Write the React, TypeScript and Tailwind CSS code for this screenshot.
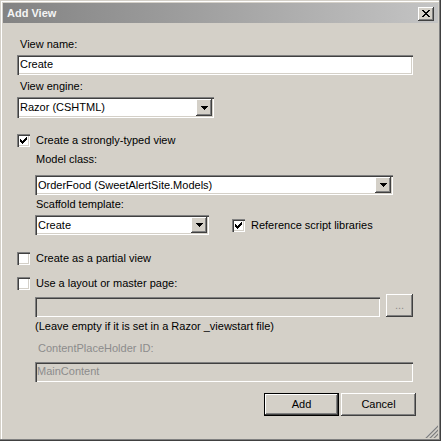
import React from "react";

const sunken =
  "shadow-[inset_1px_1px_0_#808080,inset_2px_2px_0_#404040,inset_-1px_-1px_0_#ffffff,inset_-2px_-2px_0_#d4d0c8]";
const raised =
  "shadow-[inset_-1px_-1px_0_#404040,inset_1px_1px_0_#ffffff,inset_-2px_-2px_0_#808080]";

function Check({ checked }: { checked?: boolean }) {
  return (
    <div className={`w-[13px] h-[13px] shrink-0 bg-white flex items-center justify-center ${sunken}`}>
      {checked && (
        <svg width="7" height="7" viewBox="0 0 7 7" shapeRendering="crispEdges">
          <polygon points="0,2 2,4 6,0 7,0 7,3 2,7 0,5" fill="#000" />
        </svg>
      )}
    </div>
  );
}

function Arrow() {
  return (
    <div className={`w-[16px] self-stretch bg-[#d4d0c8] flex items-center justify-center ${raised}`}>
      <svg width="7" height="4" viewBox="0 0 7 4" shapeRendering="crispEdges">
        <polygon points="0,0 7,0 3.5,4" fill="#000" />
      </svg>
    </div>
  );
}

function Select({ w, h, text }: { w: string; h: string; text: string }) {
  return (
    <div className={`${w} ${h} bg-white flex p-[2px] ${sunken}`}>
      <div className="flex-1 pl-[1px] leading-[13px] pt-[0px] flex items-center text-black">{text}</div>
      <Arrow />
    </div>
  );
}

function CheckRow({ checked, label }: { checked?: boolean; label: string }) {
  return (
    <div className="flex items-center gap-[6px] h-[13px]">
      <Check checked={checked} />
      <span className="leading-[13px]">{label}</span>
    </div>
  );
}

export default function App() {
  return (
    <div className="w-[444px] h-[445px] bg-white font-['Liberation_Sans',Arial,sans-serif] text-[11px] text-black">
      <div className="relative w-[441px] h-[441px] bg-[#d4d0c8] pt-[3px] px-[3px] flex flex-col shadow-[inset_-1px_-1px_0_#404040,inset_-2px_-2px_0_#808080,inset_1px_1px_0_#d4d0c8,inset_2px_2px_0_#ffffff]">
        <div className="h-[20px] flex items-center justify-between bg-gradient-to-r from-[#838383] to-[#c4c4c4] pl-[4px] pr-[4px]">
          <span className="font-bold text-[11px] leading-[13px] text-[#f4f4f4]">Add View</span>
          <div className={`w-[16px] h-[14px] mt-[1px] bg-[#d4d0c8] flex items-center justify-center ${raised}`}>
            <svg width="8" height="7" viewBox="0 0 8 7" shapeRendering="crispEdges">
              <path d="M0 0 L2 0 L4 2.5 L6 0 L8 0 L5 3.5 L8 7 L6 7 L4 4.5 L2 7 L0 7 L3 3.5 Z" fill="#000" />
            </svg>
          </div>
        </div>

        <div className="pl-[14px] flex flex-col">
          <div className="mt-[15px] pl-[3px] h-[13px] leading-[13px]">View name:</div>
          <div className={`mt-[4px] w-[396px] h-[20px] bg-white pl-[3px] pt-[2px] leading-[13px] ${sunken}`}>
            <div className="pt-[1px]">Create</div>
          </div>
          <div className="mt-[5px] pl-[3px] h-[13px] leading-[13px]">View engine:</div>
          <div className="mt-[4px]">
            <Select w="w-[197px]" h="h-[21px]" text="Razor (CSHTML)" />
          </div>

          <div className="mt-[16px]">
            <CheckRow checked label="Create a strongly-typed view" />
          </div>

          <div className="ml-[18px] flex flex-col">
            <div className="mt-[6px] pl-[1px] h-[13px] leading-[13px]">Model class:</div>
            <div className="mt-[9px]">
              <Select w="w-[358px]" h="h-[20px]" text="OrderFood (SweetAlertSite.Models)" />
            </div>
            <div className="mt-[3px] pl-[1px] h-[13px] leading-[13px]">Scaffold template:</div>
            <div className="mt-[4px] flex items-center">
              <Select w="w-[174px]" h="h-[20px]" text="Create" />
              <div className="ml-[23px] mt-[1px]">
                <CheckRow checked label="Reference script libraries" />
              </div>
            </div>
          </div>

          <div className="mt-[17px]">
            <CheckRow label="Create as a partial view" />
          </div>
          <div className="mt-[12px]">
            <CheckRow label="Use a layout or master page:" />
          </div>

          <div className="ml-[18px] flex flex-col">
            <div className="mt-[4px] h-[23px] flex items-end">
              <div className={`w-[345px] h-[20px] bg-[#d4d0c8] ${sunken}`} />
              <div className={`ml-[6px] w-[27px] h-[23px] bg-[#d4d0c8] flex items-center justify-center text-[#8c8c8c] ${raised}`}>
                <span className="leading-[13px] pb-[1px]">...</span>
              </div>
            </div>
            <div className="mt-[3px] h-[13px] leading-[13px]">(Leave empty if it is set in a Razor _viewstart file)</div>
            <div className="mt-[9px] pl-[3px] h-[13px] leading-[13px] text-[#8c8c8c]">ContentPlaceHolder ID:</div>
            <div className={`mt-[7px] w-[378px] h-[20px] bg-[#d4d0c8] pl-[2px] pt-[3px] leading-[13px] text-[#8c8c8c] ${sunken}`}>
              MainContent
            </div>
          </div>

          <div className="mt-[11px] w-[399px] flex justify-end gap-[2px]">
            <div className="w-[75px] h-[23px] border border-black bg-[#d4d0c8]">
              <div className={`w-full h-full flex items-center justify-center leading-[13px] ${raised}`}>Add</div>
            </div>
            <div className={`w-[75px] h-[23px] bg-[#d4d0c8] flex items-center justify-center leading-[13px] ${raised}`}>
              Cancel
            </div>
          </div>
        </div>

        <svg
          className="absolute right-[3px] bottom-[3px]"
          width="13"
          height="13"
          viewBox="0 0 13 13"
        >
          <line x1="12" y1="1" x2="1" y2="12" stroke="#ffffff" strokeWidth="1" />
          <line x1="13" y1="1" x2="1" y2="13" stroke="#808080" strokeWidth="1.4" />
          <line x1="12" y1="5" x2="5" y2="12" stroke="#ffffff" strokeWidth="1" />
          <line x1="13" y1="5" x2="5" y2="13" stroke="#808080" strokeWidth="1.4" />
          <line x1="12" y1="9" x2="9" y2="12" stroke="#ffffff" strokeWidth="1" />
          <line x1="13" y1="9" x2="9" y2="13" stroke="#808080" strokeWidth="1.4" />
        </svg>
      </div>
    </div>
  );
}
